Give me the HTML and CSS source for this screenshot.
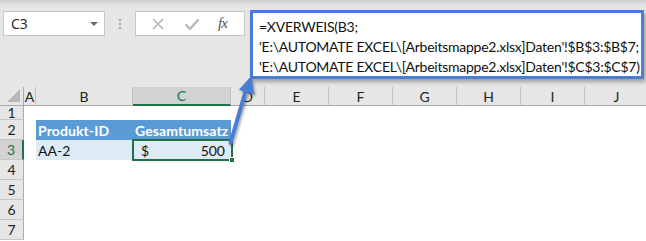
FILE: index.html
```html
<!DOCTYPE html>
<html lang="de">
  <head>
    <meta charset="UTF-8" />
    <title>XVERWEIS</title>
    <link rel="stylesheet" href="styles.css">
  </head>
  <body>
    <div class="sheet">
      <div class="formulaBar">
        <div class="nameBox">
          <span>C3</span>
          <span class="dropArrow"></span>
        </div>
        <div class="grip"><i></i><i></i><i></i></div>
        <div class="fxButtons">
          <svg class="fxIcon" width="14" height="14" viewBox="0 0 14 14">
            <path d="M2 2 L12 12 M12 2 L2 12" stroke="#b3b3b3" stroke-width="1.6" fill="none" />
          </svg>
          <svg class="fxIcon" width="16" height="14" viewBox="0 0 16 14">
            <path d="M1.5 7.5 L6 12 L14.5 2.5" stroke="#b3b3b3" stroke-width="2.2" fill="none" />
          </svg>
          <span class="fxLabel">fx</span>
        </div>
        <div class="formulaBox">
          <div>=XVERWEIS(B3;</div>
          <div>'E:\AUTOMATE EXCEL\[Arbeitsmappe2.xlsx]Daten'!$B$3:$B$7;</div>
          <div>'E:\AUTOMATE EXCEL\[Arbeitsmappe2.xlsx]Daten'!$C$3:$C$7)</div>
        </div>
      </div>

      <div class="grid">
        <div class="corner"></div>
        <div class="colHead">A</div>
        <div class="colHead">B</div>
        <div class="colHead active">C</div>
        <div class="colHead">D</div>
        <div class="colHead">E</div>
        <div class="colHead">F</div>
        <div class="colHead">G</div>
        <div class="colHead">H</div>
        <div class="colHead">I</div>
        <div class="colHead">J</div>

        <div class="rowHead short">1</div>
        <div class="row short"></div>

        <div class="rowHead">2</div>
        <div class="row">
          <div class="cell"></div>
          <div class="cell tableHead">Produkt-ID</div>
          <div class="cell tableHead">Gesamtumsatz</div>
        </div>

        <div class="rowHead active">3</div>
        <div class="row">
          <div class="cell"></div>
          <div class="cell tableBody">AA-2</div>
          <div class="cell tableBody money">
            <span>$</span><span>500</span>
            <div class="selection"><b class="handle"></b></div>
          </div>
        </div>

        <div class="rowHead">4</div>
        <div class="row"></div>
        <div class="rowHead">5</div>
        <div class="row"></div>
        <div class="rowHead">6</div>
        <div class="row"></div>
        <div class="rowHead">7</div>
        <div class="row"></div>
      </div>

      <svg class="pointer" width="646" height="241" viewBox="0 0 646 241">
        <defs>
          <filter id="soft" x="-50%" y="-50%" width="200%" height="200%">
            <feDropShadow dx="1.5" dy="1.5" stdDeviation="1.2" flood-color="#000" flood-opacity="0.35" />
          </filter>
        </defs>
        <g filter="url(#soft)" fill="#4a7dd4" stroke="#4a7dd4">
          <line x1="230.5" y1="143" x2="246.5" y2="88" stroke-width="4" stroke-linecap="round" />
          <polygon points="251,77 253.5,94 239.5,89.5" stroke-width="1" />
        </g>
      </svg>
    </div>
  </body>
</html>
```

FILE: styles.css
```css
html {
  box-sizing: border-box;
}

*,
*:before,
*:after {
  box-sizing: inherit;
}

body {
  margin: 0;
  background-color: #fff;
  font-family: "Lato", "Liberation Sans", sans-serif;
}

.sheet {
  position: relative;
  width: 646px;
  height: 241px;
  overflow: hidden;
}

/* formula bar */

.formulaBar {
  height: 87px;
  display: flex;
  align-items: flex-start;
  padding: 11px 0 0 3px;
  background: linear-gradient(#cfcfcf, #e6e6e6 6px, #e6e6e6);
}

.nameBox {
  width: 102px;
  height: 25px;
  display: flex;
  align-items: center;
  justify-content: space-between;
  padding: 0 6px 0 7px;
  background-color: #fff;
  border: 1px solid #c6c6c6;
  font-family: "Open Sans", sans-serif;
  font-size: 14px;
  color: #222;
}

.dropArrow {
  width: 0;
  height: 0;
  border-left: 4px solid transparent;
  border-right: 4px solid transparent;
  border-top: 4px solid #6b6b6b;
}

.grip {
  width: 30px;
  height: 25px;
  display: flex;
  flex-direction: column;
  align-items: center;
  justify-content: center;
  gap: 2px;
}

.grip i {
  width: 2px;
  height: 2px;
  background-color: #a6a6a6;
}

.fxButtons {
  width: 110px;
  height: 25px;
  display: flex;
  align-items: center;
  justify-content: space-around;
  padding: 0 8px 0 6px;
  background-color: #fff;
  border: 1px solid #c6c6c6;
}

.fxLabel {
  font-family: "Liberation Serif", serif;
  font-style: italic;
  font-size: 15px;
  color: #555;
  letter-spacing: -1px;
}

.formulaBox {
  width: 394px;
  height: 69px;
  margin: -1px 0 0 5px;
  padding: 4px 0 0 6px;
  background-color: #fff;
  border: 3px solid #4a7dd4;
  box-shadow: 2px 3px 4px rgba(0, 0, 0, 0.3);
  font-size: 14px;
  letter-spacing: -0.25px;
  line-height: 20px;
  color: #111;
  white-space: nowrap;
  position: relative;
  z-index: 2;
}

/* grid */

.grid {
  display: grid;
  grid-template-columns: 24px 12px 97px 98px 34px repeat(6, 64px);
  grid-template-rows: 19px 14px repeat(6, 20px);
  font-size: 14px;
}

.corner {
  position: relative;
  background-color: #e6e6e6;
  border-right: 1px solid #ababab;
  border-bottom: 1px solid #ababab;
}

.corner:after {
  content: "";
  position: absolute;
  right: 3px;
  bottom: 3px;
  border-left: 13px solid transparent;
  border-bottom: 13px solid #b8b8b8;
}

.colHead {
  display: flex;
  align-items: center;
  justify-content: center;
  background-color: #e6e6e6;
  border-right: 1px solid #c0c0c0;
  border-bottom: 1px solid #ababab;
  color: #222;
}

.colHead.active {
  background-color: #d2d2d2;
  border-bottom: 2px solid #217346;
  color: #217346;
}

.rowHead {
  display: flex;
  align-items: center;
  justify-content: center;
  background-color: #e6e6e6;
  border-right: 1px solid #ababab;
  border-bottom: 1px solid #c6c6c6;
  color: #222;
}

.rowHead.short {
  align-items: flex-start;
  line-height: 13px;
}

.rowHead.active {
  background-color: #d2d2d2;
  border-right: 2px solid #217346;
  color: #217346;
}

.row {
  grid-column: 2 / -1;
  display: flex;
}

.cell {
  display: flex;
  align-items: center;
  padding: 0 2px;
  white-space: nowrap;
}

.cell:nth-child(1) {
  width: 12px;
}

.cell:nth-child(2) {
  width: 97px;
}

.cell:nth-child(3) {
  width: 98px;
}

.tableHead {
  background-color: #5b9bd5;
  color: #fff;
  font-weight: bold;
  letter-spacing: 0.1px;
}

.tableBody {
  background-color: #ddebf7;
  color: #111;
}

.money {
  position: relative;
  justify-content: space-between;
  padding: 0 6px 0 8px;
}

.selection {
  position: absolute;
  left: -1px;
  top: -1px;
  right: -2px;
  bottom: -1px;
  border: 2px solid #217346;
}

.handle {
  position: absolute;
  right: -4px;
  bottom: -4px;
  width: 6px;
  height: 6px;
  background-color: #217346;
  border: 1px solid #fff;
}

.pointer {
  position: absolute;
  left: 0;
  top: 0;
  z-index: 3;
}
```
